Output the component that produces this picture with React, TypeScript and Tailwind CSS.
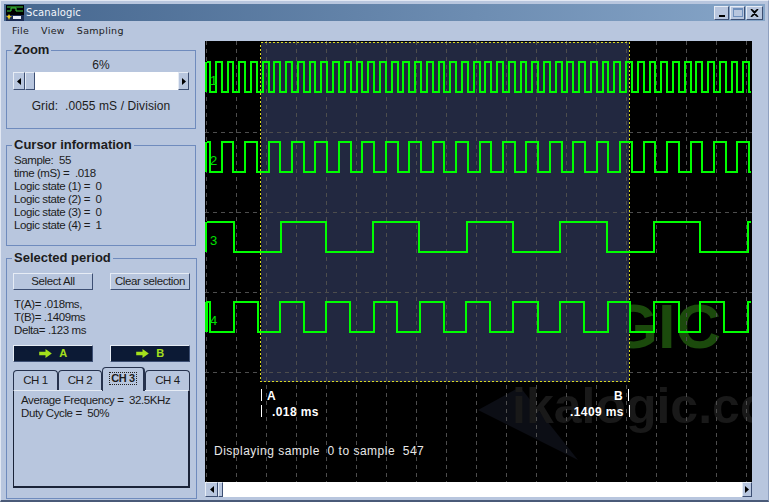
import { ReactNode } from 'react';

const raised = 'border border-t-[#e6ecf5] border-l-[#e6ecf5] border-b-[#3d4f73] border-r-[#3d4f73]';

// edge positions for a square wave, starting from a known first edge
function edges(first: number, step: number, end: number) {
    const out: number[] = [];
    for (let x = first; x < end; x += step) out.push(Math.round(x));
    return out;
}

function trace(high: number, low: number, xs: number[], startHigh: boolean, end = 751) {
    let level = startHigh;
    let d = `M206 ${low} L206 ${high} M207 ${level ? high : low}`;
    for (const x of xs) {
        d += ` L${x} ${level ? high : low}`;
        level = !level;
        d += ` L${x} ${level ? high : low}`;
    }
    return `${d} L${end} ${level ? high : low}`;
}

const CH1 = trace(62, 92, edges(210, 5.86, 750), true);
const CH2 = trace(142, 172, edges(210, 11.72, 750), true);
const CH3 = trace(222, 252, [234, 281, 326, 373, 419, 467, 513, 560, 607, 654, 700, 748], true);
const CH4 = trace(
    302,
    332,
    [
        207, 210, 234, 258, 280, 304, 326, 350, 374, 397, 420, 444, 466, 490, 513, 538, 560, 584, 608, 630, 654,
        679, 700, 724, 748,
    ],
    false,
);

const GRID_X = Array.from({ length: 19 }, (_, i) => 206.5 + i * 30);
const GRID_Y = [132.5, 212.5, 292.5, 372.5];

function Scope() {
    return (
        <svg
            viewBox="205 41 547 441"
            className="block h-[441px] w-[547px] bg-black font-['Liberation_Sans',sans-serif]"
        >
            <polygon points="478,410 520,387 578,460" fill="#0c0e15" />
            <text x="512" y="423" fontSize="50" fontWeight="700" fill="#191919">
                ikalogic.cc
            </text>
            <text x="721" y="348" textAnchor="end" fontSize="63" fontWeight="700" fill="#1b4a0c">
                LOGIC
            </text>
            <rect x="261" y="42" width="368" height="340" fill="#222840" />
            {GRID_X.map((x) => (
                <line key={x} x1={x} x2={x} y1="41" y2="482" stroke="#4d4d4d" strokeDasharray="4 4" shapeRendering="crispEdges" />
            ))}
            {GRID_Y.map((y) => (
                <line key={y} x1="205" x2="752" y1={y} y2={y} stroke="#4d4d4d" strokeDasharray="4 4" shapeRendering="crispEdges" />
            ))}
            <rect
                x="260.5"
                y="42.5"
                width="369"
                height="339"
                fill="none"
                stroke="#d8d820"
                strokeDasharray="2 2"
                shapeRendering="crispEdges"
            />
            {[CH1, CH2, CH3, CH4].map((d) => (
                <path key={d} d={d} fill="none" stroke="#00ff00" strokeWidth="2" shapeRendering="crispEdges" />
            ))}
            <g fill="#00e000" fontSize="13">
                <text x="210" y="85">1</text>
                <text x="210" y="165">2</text>
                <text x="210" y="245">3</text>
                <text x="210" y="325">4</text>
            </g>
            <g stroke="#fff" shapeRendering="crispEdges">
                <line x1="261.5" x2="261.5" y1="389" y2="401" />
                <line x1="261.5" x2="261.5" y1="405" y2="417" />
                <line x1="628.5" x2="628.5" y1="389" y2="401" />
                <line x1="629.5" x2="629.5" y1="405" y2="417" />
            </g>
            <g fill="#fff" fontSize="12" fontWeight="700">
                <text x="267" y="400">A</text>
                <text x="272" y="416" letterSpacing="0.4">.018 ms</text>
                <text x="614" y="400">B</text>
                <text x="570" y="416" letterSpacing="0.4">.1409 ms</text>
            </g>
            <text x="214" y="455" fill="#e8e8e8" fontSize="12" letterSpacing="0.5" xmlSpace="preserve">
                Displaying sample  0 to sample  547
            </text>
        </svg>
    );
}

function AppIcon() {
    return (
        <svg viewBox="0 0 18 16" className="h-[16px] w-[18px] shrink-0">
            <rect width="18" height="10" fill="#000" />
            <path d="M1 2h16M1 6h4V3h5v3h7" stroke="#3fd03f" fill="none" />
            <rect y="10" width="18" height="6" fill="#1b2d55" />
            <rect x="7" y="11" width="8" height="3" fill="#e8eef8" />
            <path d="M3 9l1 2 2 .5-2 1L3 15l-1-2.500-2-1 2-.5z" fill="#f0d020" />
        </svg>
    );
}

function WinButton({ children, wide }: { children: ReactNode; wide?: boolean }) {
    return (
        <div className={`flex h-[14px] items-center justify-center bg-[#b8c6de] ${raised} ${wide ? 'w-[17px]' : 'w-[15px]'}`}>
            {children}
        </div>
    );
}

function TitleBar() {
    return (
        <div className="mx-[3px] mt-[3px] flex h-[17px] items-center justify-between bg-gradient-to-r from-[#46678f] to-[#86a5c8] pr-[2px] pl-[2px]">
            <div className="flex items-center gap-[2px]">
                <AppIcon />
                <span className="font-['DejaVu_Sans',sans-serif] text-[10px] tracking-[0.1px] text-[#f2f5fa]">Scanalogic</span>
            </div>
            <div className="flex items-center gap-[1px]">
                <WinButton>
                    <div className="mt-[6px] h-[2px] w-[6px] bg-black" />
                </WinButton>
                <WinButton>
                    <div className="h-[9px] w-[10px] border border-t-2 border-[#6f8fbb]" />
                </WinButton>
                <WinButton wide>
                    <svg viewBox="0 0 9 8" className="h-[8px] w-[9px]">
                        <path d="M1 0l3.500 3L8 0M1 8l3.500-3L8 8M1 0l7 8M8 0L1 8" stroke="#000" strokeWidth="1.400" fill="none" />
                    </svg>
                </WinButton>
            </div>
        </div>
    );
}

function Group({ title, className, children }: { title: string; className: string; children: ReactNode }) {
    return (
        <fieldset className={`mx-[5px] w-[190px] border border-[#6f8bbd] ${className}`}>
            <legend className="ml-[5px] px-[2px] text-[13px] leading-[14px] font-bold tracking-normal text-[#1c1c1c]">
                {title}
            </legend>
            {children}
        </fieldset>
    );
}

function ScrollArrow({ dir, className }: { dir: 'left' | 'right'; className: string }) {
    return (
        <div className={`flex items-center justify-center bg-[#b8c6de] ${raised} ${className}`}>
            <svg viewBox="0 0 4 7" className="h-[7px] w-[4px]">
                <path d={dir === 'left' ? 'M4 0v7L0 3.500z' : 'M0 0v7l4-3.500z'} fill="#000" />
            </svg>
        </div>
    );
}

function FlatButton({ children }: { children: ReactNode }) {
    return (
        <button className={`h-[17px] w-[80px] whitespace-nowrap bg-[#b8c6de] text-center text-[11.5px] leading-[13px] tracking-[-0.4px] text-[#1c1c1c] ${raised}`}>
            {children}
        </button>
    );
}

function MarkerButton({ label }: { label: string }) {
    return (
        <button className={`flex h-[17px] w-[80px] items-center justify-center gap-[7px] bg-[#0c1a35] ${raised}`}>
            <svg viewBox="0 0 14 10" className="h-[9px] w-[13px]">
                <path d="M0 3h7V0l7 5-7 5V7H0z" fill="#a4e01c" />
            </svg>
            <span className="text-[11px] leading-none font-bold text-[#a4e01c]">{label}</span>
        </button>
    );
}

function Tab({ label, active, className }: { label: string; active?: boolean; className: string }) {
    return (
        <div
            className={`flex items-center justify-center rounded-t-[4px] border-x border-t border-x-[#26324d] border-t-[#26324d] bg-[#b8c6de] text-[11.5px] leading-none tracking-[-0.4px] ${className} ${
                active ? 'z-10 -mb-[1px] h-[24px] border-r-2 pb-[2px] font-bold' : 'h-[20px]'
            }`}
        >
            {active ? <span className="border border-dotted border-[#222] px-[1px] text-[11px]">{label}</span> : label}
        </div>
    );
}

function Sidebar() {
    return (
        <div className="flex w-[204px] shrink-0 flex-col pt-[2px] text-[11.5px] leading-[13px] tracking-[-0.4px] text-[#1c1c1c]">
            <Group title="Zoom" className="h-[86px]">
                <p className="mt-[1px] text-center text-[12px] leading-[14px] tracking-normal">6%</p>
                <div className="mx-[6px] flex h-[18px]">
                    <ScrollArrow dir="left" className="w-[12px]" />
                    <div className={`w-[10px] bg-[#b8c6de] ${raised}`} />
                    <div className="flex-1 bg-white" />
                    <ScrollArrow dir="right" className="w-[11px]" />
                </div>
                <p className="mt-[10px] text-center text-[12px] tracking-[0.1px]">Grid:&nbsp; .0055 mS / Division</p>
            </Group>
            <Group title="Cursor information" className="mt-[9px] h-[108px]">
                <div className="mt-[2px] ml-[7px]">
                    <p>Sample:&nbsp; 55</p>
                    <p>time (mS) =&nbsp; .018</p>
                    <p>Logic state (1) =&nbsp; 0</p>
                    <p>Logic state (2) =&nbsp; 0</p>
                    <p>Logic state (3) =&nbsp; 0</p>
                    <p>Logic state (4) =&nbsp; 1</p>
                </div>
            </Group>
            <Group title="Selected period" className="mt-[5px] h-[248px]">
                <div className="mt-[8px] flex justify-between px-[6px]">
                    <FlatButton>Select All</FlatButton>
                    <FlatButton>Clear selection</FlatButton>
                </div>
                <div className="mt-[8px] ml-[7px]">
                    <p>T(A)= .018ms,</p>
                    <p>T(B)= .1409ms</p>
                    <p>Delta= .123 ms</p>
                </div>
                <div className="mt-[8px] flex justify-between px-[6px]">
                    <MarkerButton label="A" />
                    <MarkerButton label="B" />
                </div>
                <div className="mt-[4px] flex h-[24px] items-end px-[6px]">
                    <Tab label="CH 1" className="w-[45px]" />
                    <Tab label="CH 2" className="w-[44px]" />
                    <Tab label="CH 3" active className="w-[43px]" />
                    <Tab label="CH 4" className="w-[45px]" />
                </div>
                <div className="mx-[6px] h-[98px] border border-r-2 border-b-2 border-[#1a2338] border-t-[#e6ecf5] px-[7px] pt-[3px]">
                    <p>Average Frequency =&nbsp; 32.5KHz</p>
                    <p>Duty Cycle =&nbsp; 50%</p>
                </div>
            </Group>
        </div>
    );
}

export default function App() {
    return (
        <div className="flex h-[502px] w-[769px] flex-col overflow-hidden border-t border-r border-b-2 border-l border-t-[#e2e8f3] border-r-[#8fa0bf] border-b-[#4a5a78] border-l-[#e2e8f3] bg-[#b8c6de] font-['Liberation_Sans',Arial,sans-serif]">
            <TitleBar />
            <div className="flex h-[20px] items-center gap-[12px] pl-[11px] font-['DejaVu_Sans',sans-serif] text-[9.5px] tracking-[0.3px] text-[#1c1c1c]">
                <span>File</span>
                <span>View</span>
                <span>Sampling</span>
            </div>
            <div className="flex min-h-0 flex-1">
                <Sidebar />
                <div className="flex w-[547px] flex-col">
                    <Scope />
                    <div className="flex h-[15px]">
                        <ScrollArrow dir="left" className="w-[13px]" />
                        <div className={`w-[5px] bg-[#b8c6de] ${raised}`} />
                        <div className="flex-1 bg-white" />
                        <ScrollArrow dir="right" className="w-[10px]" />
                    </div>
                </div>
            </div>
        </div>
    );
}
